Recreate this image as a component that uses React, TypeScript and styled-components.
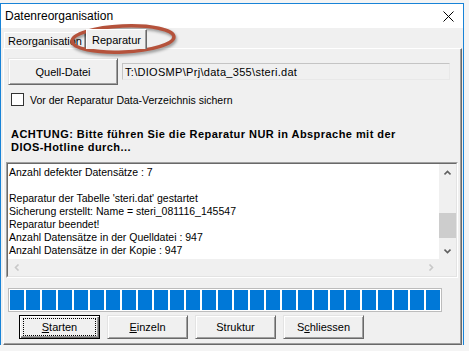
import styled, { createGlobalStyle } from "styled-components"

const GlobalStyle = createGlobalStyle`
* { box-sizing: border-box; }
body {
    margin: 0;
    background: #f4f4f4;
    font-family: "Liberation Sans", Arial, sans-serif;
    font-size: 11px;
    color: #000;
}
`

const Window = styled.div`
position: relative;
width: 464px;
margin-top: 3px;
border: 1px solid #1883d7;
border-bottom: none;
background: #f0f0f0;
`

const TitleBar = styled.div`
height: 24px;
background: #fff;
display: flex;
align-items: center;
justify-content: space-between;
padding: 0 9px 0 4px;
font-size: 12px;
`

const DialogBody = styled.div`
padding: 0 1px 0 2px;
`

const TabStrip = styled.div`
display: flex;
align-items: flex-end;
height: 20px;
padding-left: 1px;
`

const Tab = styled.div<{ $active?: boolean }>`
height: ${p => (p.$active ? 20 : 16)}px;
width: ${p => (p.$active ? 61 : 82)}px;
display: flex;
align-items: center;
justify-content: center;
padding-top: ${p => (p.$active ? 0 : 1)}px;
border-top: 1px solid #fff;
border-left: 1px solid #fff;
border-right: 1px solid #696969;
box-shadow: inset -1px 0 0 #a0a0a0;
background: #f0f0f0;
margin-bottom: ${p => (p.$active ? -1 : 0)}px;
position: relative;
z-index: ${p => (p.$active ? 1 : 0)};
`

const Panel = styled.div`
border-top: 1px solid #fff;
border-left: 1px solid #fff;
border-right: 1px solid #696969;
border-bottom: 1px solid #696969;
box-shadow: inset -1px -1px 0 #a0a0a0;
padding-bottom: 5px;
display: flex;
flex-direction: column;
`

const SourceRow = styled.div`
display: flex;
align-items: center;
gap: 4px;
margin: 9px 0 0 4px;
`

const Button = styled.button<{ $default?: boolean; $width?: number; $height?: number }>`
font: inherit;
color: #000;
background: #f0f0f0;
width: ${p => p.$width ?? 81}px;
height: ${p => p.$height ?? 24}px;
border: 1px solid ${p => (p.$default ? "#000" : "#e3e3e3")};
border-right-color: ${p => (p.$default ? "#000" : "#696969")};
border-bottom-color: ${p => (p.$default ? "#000" : "#696969")};
box-shadow: ${p =>
    p.$default
        ? "inset 1px 1px 0 #fff, inset -1px -1px 0 #696969, inset -2px -2px 0 #a0a0a0"
        : "inset 1px 1px 0 #fff, inset -1px -1px 0 #a0a0a0"};
padding: 2px 3px;
display: flex;
align-items: stretch;
cursor: default;
`

const ButtonLabel = styled.span<{ $focus?: boolean }>`
flex: 1;
display: flex;
align-items: center;
justify-content: center;
border: 1px dotted ${p => (p.$focus ? "#000" : "transparent")};
`

const PathField = styled.div`
width: 328px;
height: 17px;
border: 1px solid #c4c4c4;
border-right-color: #e8e8e8;
border-bottom-color: #e8e8e8;
padding-left: 2px;
display: flex;
align-items: center;
white-space: nowrap;
letter-spacing: 0.3px;
`

const CheckRow = styled.label`
display: flex;
align-items: center;
margin: 8px 0 0 7px;
height: 13px;
font-size: 10.5px;
`

const CheckBox = styled.span`
width: 13px;
height: 13px;
border: 1px solid #333;
background: #fff;
margin-right: 6px;
`

const Warning = styled.div`
margin: 22px 0 0 7px;
font-weight: bold;
line-height: 13px;
letter-spacing: 0.45px;
`

const LogFrame = styled.div`
margin: 8px 0 0 2px;
width: 452px;
border: 1px solid #a0a0a0;
border-right-color: #fff;
border-bottom-color: #fff;
`

const LogInner = styled.div`
border: 1px solid #696969;
border-right-color: #e3e3e3;
border-bottom-color: #e3e3e3;
`

const LogMain = styled.div`
display: flex;
height: 95px;
`

const LogText = styled.div`
flex: 1;
background: #fff;
padding: 2px 0 0 1px;
font-size: 10.5px;
line-height: 13px;
white-space: pre;
overflow: hidden;
`

const VScroll = styled.div`
width: 17px;
background: #f0f0f0;
display: flex;
flex-direction: column;
`

const ArrowCell = styled.div`
width: 17px;
height: 17px;
display: flex;
align-items: center;
justify-content: center;
`

const Track = styled.div`
flex: 1;
`

const Thumb = styled.div`
margin-top: 32px;
height: 25px;
background: #cdcdcd;
`

const HScroll = styled.div`
display: flex;
height: 17px;
background: #f0f0f0;
`

const Progress = styled.div`
margin: 10px 0 0 4px;
width: 434px;
height: 24px;
border: 1px solid #bcbcbc;
background: #fff;
padding: 1px;
display: flex;
gap: 2px;
`

const Block = styled.span`
width: 14px;
height: 20px;
background: #0078d7;
`

const ButtonRow = styled.div`
display: flex;
gap: 7px;
margin: 3px 0 0 15px;
`

const Ring = styled.svg`
position: absolute;
left: 62px;
top: 14px;
overflow: visible;
filter: drop-shadow(1px 2px 1.5px rgba(0, 0, 0, 0.4));
`

const Chevron = ({ dir, color }: { dir: "up" | "down" | "left" | "right"; color: string }) => {
    const pts = {
        up: "0.5,4.5 3.5,1.5 6.5,4.5",
        down: "0.5,1.5 3.5,4.5 6.5,1.5",
        left: "4.5,0.5 1.5,3.5 4.5,6.5",
        right: "1.5,0.5 4.5,3.5 1.5,6.5",
    }[dir]
    const vertical = dir === "up" || dir === "down"
    return (
        <svg width={vertical ? 7 : 6} height={vertical ? 6 : 7}>
            <polyline points={pts} fill="none" stroke={color} strokeWidth="1.6" />
        </svg>
    )
}

const logLines = [
    "Anzahl defekter Datensätze : 7",
    "",
    "Reparatur der Tabelle 'steri.dat' gestartet",
    "Sicherung erstellt: Name = steri_081116_145547",
    "Reparatur beendet!",
    "Anzahl Datensätze in der Quelldatei : 947",
    "Anzahl Datensätze in der Kopie : 947",
]

export default function App() {
    return (
        <>
            <GlobalStyle />
            <Window>
                <TitleBar>
                    <span>Datenreorganisation</span>
                    <svg width="11" height="11">
                        <path d="M0.5 0.5 L10.5 10.5 M10.5 0.5 L0.5 10.5" stroke="#000" strokeWidth="1" />
                    </svg>
                </TitleBar>
                <DialogBody>
                    <TabStrip>
                        <Tab>Reorganisation</Tab>
                        <Tab $active>Reparatur</Tab>
                    </TabStrip>
                    <Panel>
                        <SourceRow>
                            <Button $width={110} $height={27}>
                                <ButtonLabel>Quell-Datei</ButtonLabel>
                            </Button>
                            <PathField>T:\DIOSMP\Prj\data_355\steri.dat</PathField>
                        </SourceRow>
                        <CheckRow>
                            <CheckBox />
                            Vor der Reparatur Data-Verzeichnis sichern
                        </CheckRow>
                        <Warning>
                            ACHTUNG: Bitte führen Sie die Reparatur NUR in Absprache mit der
                            <br />
                            DIOS-Hotline durch...
                        </Warning>
                        <LogFrame>
                            <LogInner>
                                <LogMain>
                                    <LogText>{logLines.join("\n")}</LogText>
                                    <VScroll>
                                        <ArrowCell><Chevron dir="up" color="#606060" /></ArrowCell>
                                        <Track><Thumb /></Track>
                                        <ArrowCell><Chevron dir="down" color="#606060" /></ArrowCell>
                                    </VScroll>
                                </LogMain>
                                <HScroll>
                                    <ArrowCell><Chevron dir="left" color="#c8c8c8" /></ArrowCell>
                                    <Track />
                                    <ArrowCell><Chevron dir="right" color="#c8c8c8" /></ArrowCell>
                                    <ArrowCell />
                                </HScroll>
                            </LogInner>
                        </LogFrame>
                        <Progress>
                            {Array.from({ length: 27 }, (_, i) => <Block key={i} />)}
                        </Progress>
                        <ButtonRow>
                            <Button $default>
                                <ButtonLabel $focus><u>S</u>tarten</ButtonLabel>
                            </Button>
                            <Button>
                                <ButtonLabel><u>E</u>inzeln</ButtonLabel>
                            </Button>
                            <Button>
                                <ButtonLabel>Struktur</ButtonLabel>
                            </Button>
                            <Button>
                                <ButtonLabel>S<u>c</u>hliessen</ButtonLabel>
                            </Button>
                        </ButtonRow>
                    </Panel>
                </DialogBody>
                <Ring width="120" height="40" viewBox="0 0 120 40">
                    <ellipse cx="60" cy="21" rx="51" ry="13" fill="none" stroke="#b5523b" strokeWidth="3.4"
                        transform="rotate(-2.5 60 21)" />
                </Ring>
            </Window>
        </>
    )
}
